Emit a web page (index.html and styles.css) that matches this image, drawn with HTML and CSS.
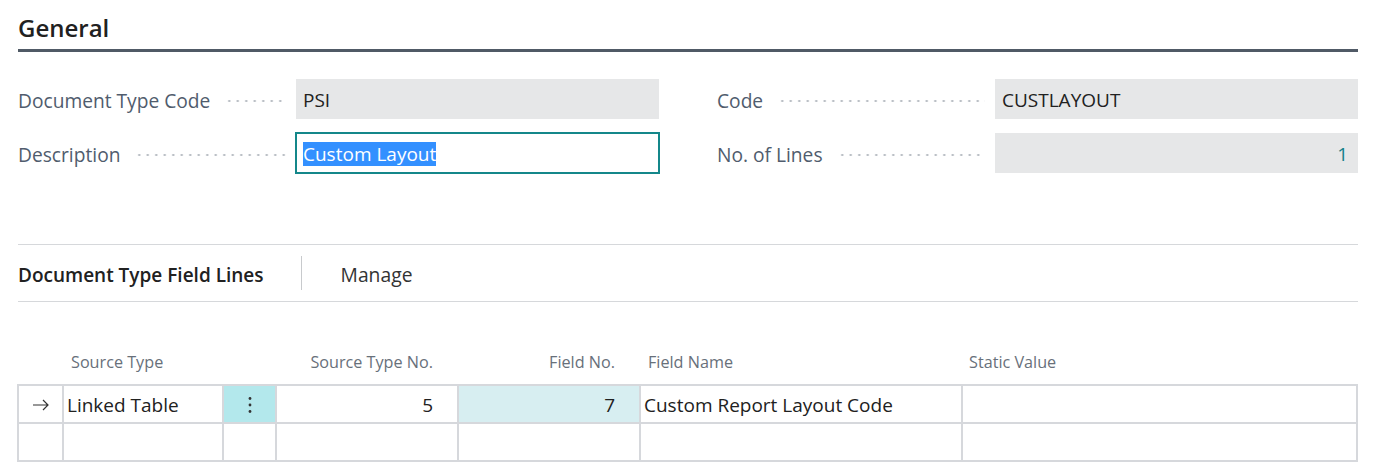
FILE: index.html
```html
<!DOCTYPE html>
<html>
<head>
<meta charset="utf-8">
<link rel="stylesheet" href="styles.css">
</head>
<body>
<div class="page">
  <div class="section-title">General</div>
  <div class="fields">
    <div class="col">
      <div class="field">
        <span class="label">Document Type Code</span><span class="leader"></span>
        <div class="value ro">PSI</div>
      </div>
      <div class="field">
        <span class="label">Description</span><span class="leader"></span>
        <div class="value edit"><span class="sel">Custom Layout</span></div>
      </div>
    </div>
    <div class="col">
      <div class="field">
        <span class="label">Code</span><span class="leader"></span>
        <div class="value ro">CUSTLAYOUT</div>
      </div>
      <div class="field">
        <span class="label">No. of Lines</span><span class="leader"></span>
        <div class="value ro num">1</div>
      </div>
    </div>
  </div>

  <div class="actionbar">
    <span class="part-title">Document Type Field Lines</span>
    <span class="sep"></span>
    <span class="action">Manage</span>
  </div>

  <div class="grid">
    <div class="ghead">
      <div class="c h-arrow"></div>
      <div class="c c-src">Source Type</div>
      <div class="c c-menu"></div>
      <div class="c c-no right">Source Type No.</div>
      <div class="c c-fno right">Field No.</div>
      <div class="c c-fname">Field Name</div>
      <div class="c c-static">Static Value</div>
    </div>
    <div class="gbody">
      <div class="grow">
        <div class="c c-arrow cell">
          <svg width="18" height="12" viewBox="0 0 18 12"><path d="M1 6h15M11 1l5 5-5 5" fill="none" stroke="#333" stroke-width="1.2"/></svg>
        </div>
        <div class="c c-src cell">Linked Table</div>
        <div class="c c-menu cell menu">
          <svg width="4" height="18" viewBox="0 0 4 18"><circle cx="2" cy="2.5" r="1.4" fill="#333"/><circle cx="2" cy="9" r="1.4" fill="#333"/><circle cx="2" cy="15.5" r="1.4" fill="#333"/></svg>
        </div>
        <div class="c c-no cell right">5</div>
        <div class="c c-fno cell right focus">7</div>
        <div class="c c-fname cell">Custom Report Layout Code</div>
        <div class="c c-static cell"></div>
      </div>
      <div class="grow">
        <div class="c c-arrow cell"></div>
        <div class="c c-src cell"></div>
        <div class="c c-menu cell"></div>
        <div class="c c-no cell"></div>
        <div class="c c-fno cell"></div>
        <div class="c c-fname cell"></div>
        <div class="c c-static cell"></div>
      </div>
    </div>
  </div>
</div>
</body>
</html>
```
FILE: styles.css
```css
* { box-sizing: border-box; }
html, body { margin: 0; padding: 0; background: #fff; }
body {
  font-family: "Open Sans", "Noto Sans", sans-serif;
  color: #212121;
  width: 1378px;
  height: 472px;
  overflow: hidden;
}
.page {
  padding: 0 20px 0 18px;
}
.section-title {
  height: 52px;
  padding-top: 12px;
  font-size: 24px;
  font-weight: 600;
  line-height: 32px;
  color: #212121;
  border-bottom: 3px solid #505a66;
}
.fields {
  display: flex;
  gap: 58px;
  padding-top: 27px;
}
.col {
  flex: 1;
  display: flex;
  flex-direction: column;
  gap: 14px;
}
.field {
  display: flex;
  align-items: center;
  height: 40px;
}
.label {
  font-size: 19.2px;
  color: #505c6d;
  white-space: nowrap;
  padding-top: 2px;
}
.leader {
  flex: 1;
  height: 4px;
  margin: 4px 10px 0 15px;
  background-image: radial-gradient(circle, #b3b8bf 0.9px, transparent 1.3px);
  background-size: 8.5px 4px;
  background-repeat: repeat-x;
}
.value {
  width: 363px;
  height: 40px;
  flex: none;
  display: flex;
  align-items: center;
  padding: 2px 7px 0;
  font-size: 19px;
  color: #212121;
}
.ro { background: #e6e7e8; }
.num { justify-content: flex-end; color: #12808a; padding-right: 10px; }
.edit {
  background: #fff;
  outline: 2px solid #14878a;
  outline-offset: -1px;
  padding-left: 7px;
  padding-top: 1px;
}
.sel {
  background: #3390ff;
  color: #fff;
  line-height: 24px;
}
.actionbar {
  margin-top: 71px;
  height: 58px;
  padding-top: 3px;
  border-top: 1px solid #d6d8db;
  border-bottom: 1px solid #d6d8db;
  display: flex;
  align-items: center;
}
.part-title {
  font-size: 19px;
  font-weight: 600;
  color: #212121;
}
.sep {
  width: 1px;
  height: 34px;
  margin-top: -4px;
  background: #c8cacd;
  margin-left: 37px;
  margin-right: 39px;
}
.action {
  font-size: 19.3px;
  color: #333;
}
.ghead {
  display: flex;
  height: 82px;
  align-items: flex-end;
  padding-bottom: 11px;
}
.ghead .c {
  font-size: 16.2px;
  color: #68707a;
  white-space: nowrap;
}
.h-arrow { width: 44px; flex: none; }
.c-arrow { width: 42px; flex: none; }
.c-src { width: 160px; flex: none; }
.c-menu { width: 53px; flex: none; }
.c-no { width: 182px; flex: none; }
.c-fno { width: 182px; flex: none; }
.c-fname { width: 322px; flex: none; }
.c-static { flex: 1; min-width: 0; }
.ghead .c-src { padding-left: 9px; }
.ghead .c-fname { padding-left: 9px; }
.ghead .c-static { padding-left: 8px; }
.ghead .c-no { padding-right: 24px; }
.ghead .c-fno { padding-right: 24px; }
.right { text-align: right; }
.gbody {
  border: 2px solid #d6d8dc;
  margin-left: -1px;
}
.grow {
  display: flex;
  height: 36px;
}
.grow + .grow {
  height: 38px;
  border-top: 2px solid #d6d8dc;
}
.cell {
  height: 100%;
  font-size: 19px;
  color: #212121;
  display: flex;
  align-items: center;
  padding: 1px 3px 0;
  border-left: 2px solid #d6d8dc;
}
.cell.c-arrow { width: 43px; border-left: none; justify-content: center; }
.cell.right { justify-content: flex-end; padding-right: 24px; }
.menu { background: #b3e8ec; justify-content: center; }
.focus { background: #d7eef1; }
```
